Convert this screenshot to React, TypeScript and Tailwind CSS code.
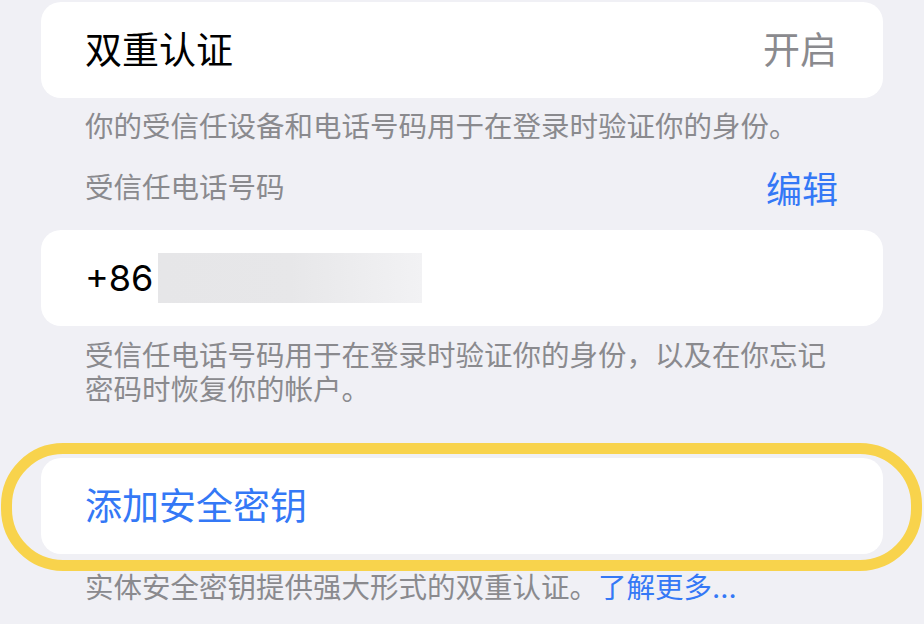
const cjk = "font-['Inter','Noto_Sans_CJK_SC',sans-serif]";

export default function App() {
  return (
    <div className={`min-h-[624px] w-full bg-[#f0f0f5] px-[41px] pt-[2px] ${cjk}`}>
      {/* two-factor card */}
      <div className="flex h-[96px] items-center justify-between rounded-[20px] bg-white pl-[44px] pr-[46px]">
        <span className="text-[37px] leading-none text-black">双重认证</span>
        <span className="text-[37px] leading-none text-[#8a8a8e]">开启</span>
      </div>
      <p className="mt-[12px] pl-[44px] text-[28.5px] leading-[34px] text-[#8a8a8e]">
        你的受信任设备和电话号码用于在登录时验证你的身份。
      </p>

      <div className="mt-[24px] flex h-[40px] items-center justify-between pl-[44px] pr-[45px]">
        <span className="text-[28.5px] leading-none text-[#8a8a8e]">受信任电话号码</span>
        <span className="mt-[4px] text-[36px] leading-none text-[#3478f6]">编辑</span>
      </div>

      {/* phone number card */}
      <div className="mt-[22px] flex h-[96px] items-center rounded-[20px] bg-white pl-[44px]">
        <span className="text-[36px] leading-none text-black">+86</span>
        <div className="ml-[5px] h-[50px] w-[264px] bg-gradient-to-r from-[#e6e6e8] via-[#e7e7e9] to-[#f2f2f4]" />
      </div>
      <p className="mt-[13px] pl-[44px] text-[28.5px] leading-[34px] text-[#8a8a8e]">
        受信任电话号码用于在登录时验证你的身份，以及在你忘记
        <br />
        密码时恢复你的帐户。
      </p>

      {/* security key card, highlighted */}
      <div className="relative mt-[51px]">
        <div className="flex h-[96px] items-center rounded-[20px] bg-white pl-[44px]">
          <span className="text-[37px] leading-none text-[#3478f6]">添加安全密钥</span>
        </div>
        <div className="pointer-events-none absolute -bottom-[17px] -left-[40px] -right-[39px] -top-[15px] rounded-[62px] border-[11px] border-[#f8d34c]" />
      </div>
      <p className="mt-[17px] pl-[44px] text-[28.5px] leading-[34px] text-[#8a8a8e]">
        实体安全密钥提供强大形式的双重认证。<span className="text-[#3478f6]">了解更多...</span>
      </p>
    </div>
  );
}
